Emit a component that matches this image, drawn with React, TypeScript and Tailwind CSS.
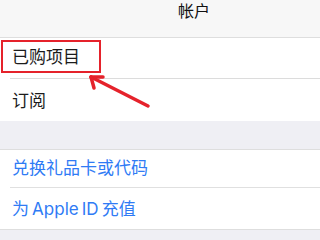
const font = { fontFamily: 'Inter, "Noto Sans CJK SC", "Noto Sans", sans-serif' };

function Row({ label, blue }: { label: string; blue?: boolean }) {
  return (
    <div className="flex h-full items-center pl-[12px]">
      <span className={blue ? "text-[17px] text-[#2f7bf5]" : "text-[17px] text-[#1c1c1c]"}>{label}</span>
    </div>
  );
}

export default function App() {
  return (
    <div className="relative h-[240px] w-[320px] overflow-hidden bg-[#efeff4]" style={font}>
      <div className="flex h-[38px] justify-center border-b border-[#dedede] bg-[#f7f7f7] pl-[68px]">
        <span className="text-[16px] leading-[23px] text-[#111]">帐户</span>
      </div>
      <div className="flex flex-col bg-white">
        <div className="h-[40px]">
          <Row label="已购项目" />
        </div>
        <div className="ml-[10px] h-px bg-[#dcdcdc]" />
        <div className="h-[42px] pt-[4px]">
          <Row label="订阅" />
        </div>
      </div>
      <div className="h-[29px] border-b border-[#dedede] bg-[#efeff4]" />
      <div className="flex flex-col bg-white">
        <div className="h-[37px] pt-[1px]">
          <Row label="兑换礼品卡或代码" blue />
        </div>
        <div className="ml-[10px] h-px bg-[#e0e0e0]" />
        <div className="h-[41px] pt-[2px]">
          <Row label={"为\u2009Apple\u2009ID\u2009充值"} blue />
        </div>
      </div>
      <div className="border-t border-[#dedede]" />

      <div className="absolute left-[1px] top-[40px] h-[33px] w-[100px] border-2 border-[#e5222b]" />
      <svg className="absolute left-0 top-0" width="320" height="240" viewBox="0 0 320 240">
        <g stroke="#e5222b" strokeWidth="3.5" strokeLinecap="round" fill="none">
          <line x1="91" y1="77" x2="148" y2="106" />
          <line x1="91" y1="77" x2="103" y2="77" />
          <line x1="91" y1="77" x2="94" y2="88" />
        </g>
      </svg>
    </div>
  );
}
